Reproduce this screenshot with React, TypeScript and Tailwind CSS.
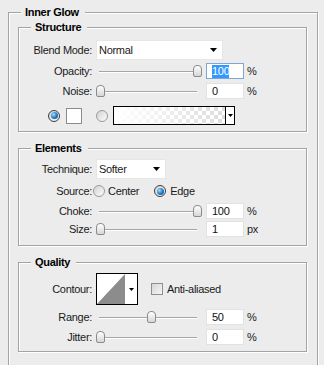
import React from "react";

type RowProps = {
  label: string;
  className?: string;
  inner?: string;
  children?: React.ReactNode;
};

function Row({ label, className = "", inner = "ml-[4px]", children }: RowProps) {
  return (
    <div className={"flex items-center " + className}>
      <span className="w-[73px] shrink-0 text-right">{label}</span>
      <div className={"flex items-center " + inner}>{children}</div>
    </div>
  );
}

function Group({
  title,
  className = "",
  children,
}: {
  title: string;
  className?: string;
  children?: React.ReactNode;
}) {
  return (
    <fieldset
      className={
        "border border-[#a3a3a3] shadow-[1px_1px_0_#fff,inset_1px_1px_0_#fff] " +
        className
      }
    >
      <legend className="ml-[12px] bg-[#ececec] pl-[4px] pr-[6px] font-bold leading-[14px] text-black">
        {title}
      </legend>
      {children}
    </fieldset>
  );
}

function Arrow() {
  return (
    <svg width="7" height="4" viewBox="0 0 7 4">
      <path d="M0 0h7L3.5 4z" fill="#000" />
    </svg>
  );
}

function Select({ value, width }: { value: string; width: string }) {
  return (
    <div
      className={
        "flex h-[20px] items-center border border-[#e6e6e6] bg-white pl-[2px] " +
        width
      }
    >
      <span>{value}</span>
      <span className="ml-auto mr-[5px] flex">
        <Arrow />
      </span>
    </div>
  );
}

function Radio({ checked }: { checked?: boolean }) {
  return (
    <span
      className={
        "flex h-[12px] w-[12px] shrink-0 items-center justify-center rounded-full border bg-[linear-gradient(135deg,#d2d2d2,#fdfdfd)] " +
        (checked ? "border-[#3c3c3c]" : "border-[#9a9a9a]")
      }
    >
      {checked && (
        <span className="h-[7px] w-[7px] rounded-full bg-[radial-gradient(circle_at_35%_35%,#9fdcff,#1f78c2_55%,#0b3d6e)]" />
      )}
    </span>
  );
}

function Slider({ pos }: { pos: number }) {
  return (
    <div className="relative h-[13px] w-[104px] shrink-0">
      <div className="mx-[3px] mt-[6px] h-[2px] border-t border-[#a6a6a6] bg-white" />
      <div
        className="absolute top-0 h-[12px] w-[9px] rounded-t-[4px] rounded-b-[2px] border border-[#8b8b8b] bg-[linear-gradient(#ffffff,#d6d6d6)]"
        style={{ left: pos }}
      />
    </div>
  );
}

function NumBox({ value, focused }: { value: string; focused?: boolean }) {
  return (
    <div
      className={
        "ml-[6px] flex h-[16px] w-[38px] items-center border bg-white pl-[5px] " +
        (focused ? "border-[#7fa6d4]" : "border-[#e2e2e2]")
      }
    >
      {focused ? (
        <span className="bg-[#3399ff] leading-[13px] text-white">{value}</span>
      ) : (
        <span className="text-[#111]">{value}</span>
      )}
    </div>
  );
}

function SliderRow({
  label,
  pos,
  value,
  unit,
  focused,
  className,
}: {
  label: string;
  pos: number;
  value: string;
  unit: string;
  focused?: boolean;
  className: string;
}) {
  return (
    <Row label={label} className={className}>
      <Slider pos={pos} />
      <NumBox value={value} focused={focused} />
      <span className="ml-[3px]">{unit}</span>
    </Row>
  );
}

export default function App() {
  return (
    <div className="h-[365px] w-[324px] overflow-hidden bg-[#ececec] pt-[5px] font-['Liberation_Sans',Arial,sans-serif] text-[11px] tracking-[-0.3px] text-[#1a1a1a]">
      <fieldset className="ml-[8px] h-[420px] w-[310px] border border-[#a3a3a3] pl-[9px] pr-[10px] pt-[1px] shadow-[1px_1px_0_#fff,inset_1px_1px_0_#fff]">
        <legend className="ml-[3px] bg-[#ececec] pl-[4px] pr-[6px] font-bold leading-[14px] text-black">
          Inner Glow
        </legend>

        <Group title="Structure" className="pb-[6px]">
          <Row label="Blend Mode:" className="mt-[6px] h-[20px]">
            <Select value="Normal" width="w-[127px]" />
          </Row>
          <SliderRow
            label="Opacity:"
            pos={97}
            value="100"
            unit="%"
            focused
            className="mt-[3px] h-[16px]"
          />
          <SliderRow
            label="Noise:"
            pos={0}
            value="0"
            unit="%"
            className="mt-[4px] h-[16px]"
          />
          <div className="mt-[7px] flex h-[19px] items-center pl-[29px]">
            <Radio checked />
            <span className="ml-[6px] h-[16px] w-[16px] border border-[#8a8a8a] bg-white" />
            <span className="ml-[14px]">
              <Radio />
            </span>
            <div className="ml-[5px] flex h-[19px] w-[122px] border border-black">
              <div className="flex-1 bg-[linear-gradient(to_right,#ffffff,#ffffff00),conic-gradient(#dcdcdc_25%,#ffffff_0_50%,#dcdcdc_0_75%,#ffffff_0)] bg-[length:100%_100%,8px_8px]" />
              <div className="flex w-[9px] items-center justify-center border-l border-black bg-white">
                <svg width="5" height="3" viewBox="0 0 5 3">
                  <path d="M0 0h5L2.5 3z" fill="#000" />
                </svg>
              </div>
            </div>
          </div>
        </Group>

        <Group title="Elements" className="mt-[9px] pb-[8px]">
          <Row label="Technique:" className="mt-[4px] h-[20px]">
            <Select value="Softer" width="w-[70px]" />
          </Row>
          <Row label="Source:" className="mt-[5px] h-[14px]" inner="ml-[1px]">
            <Radio />
            <span className="ml-[3px]">Center</span>
            <span className="ml-[15px]">
              <Radio checked />
            </span>
            <span className="ml-[4px]">Edge</span>
          </Row>
          <SliderRow
            label="Choke:"
            pos={97}
            value="100"
            unit="%"
            className="mt-[5px] h-[16px]"
          />
          <SliderRow
            label="Size:"
            pos={0}
            value="1"
            unit="px"
            className="mt-[2px] h-[16px]"
          />
        </Group>

        <Group title="Quality" className="mt-[9px] pb-[6px]">
          <Row label="Contour:" className="mt-[4px] h-[32px]">
            <div className="flex h-[32px] w-[42px] border border-black bg-white">
              <svg width="28" height="30" viewBox="0 0 28 30" className="shrink-0">
                <path d="M0 30L28 0V30z" fill="#8c8c8c" />
              </svg>
              <div className="flex flex-1 items-center justify-center">
                <svg width="5" height="3" viewBox="0 0 5 3">
                  <path d="M0 0h5L2.5 3z" fill="#000" />
                </svg>
              </div>
            </div>
            <span className="ml-[13px] h-[12px] w-[12px] border border-[#8f8f8f] bg-[linear-gradient(135deg,#d6d6d6,#f6f6f6)]" />
            <span className="ml-[4px]">Anti-aliased</span>
          </Row>
          <SliderRow
            label="Range:"
            pos={51}
            value="50"
            unit="%"
            className="mt-[4px] h-[16px]"
          />
          <SliderRow
            label="Jitter:"
            pos={0}
            value="0"
            unit="%"
            className="mt-[4px] h-[16px]"
          />
        </Group>
      </fieldset>
    </div>
  );
}
